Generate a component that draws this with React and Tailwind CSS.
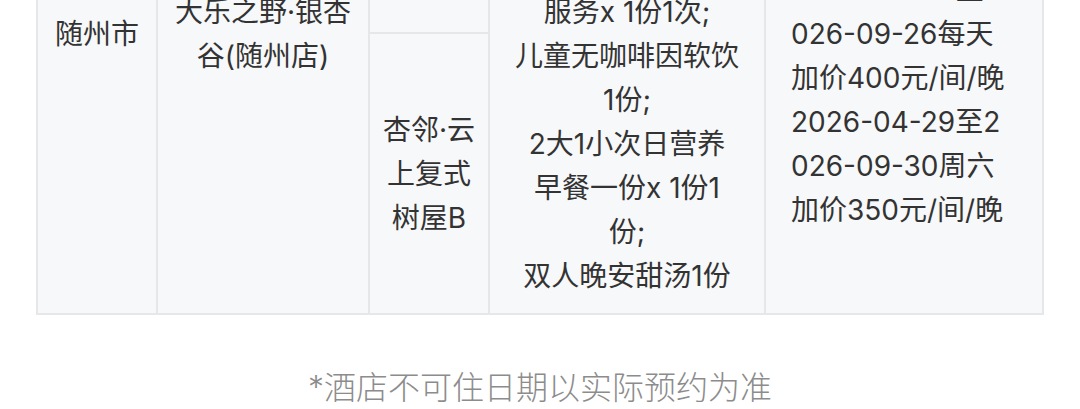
import React from 'react';

const FONT = { fontFamily: 'Inter, "Noto Sans CJK SC", sans-serif' };

const packageLines = [
  '入住1晚;',
  '欢迎水果1份;',
  '双人下午茶1份;',
  '亲子自然研学课程',
  '管家专属接送站',
  '服务x 1份1次;',
  '儿童无咖啡因软饮',
  '1份;',
  '2大1小次日营养',
  '早餐一份x 1份1',
  '份;',
  '双人晚安甜汤1份',
];

const priceLines = [
  '2026-04-29至2',
  '026-05-05每天',
  '加价600元/间/晚',
  '2026-05-06至2',
  '026-09-26每天',
  '加价400元/间/晚',
  '2026-04-29至2',
  '026-09-30周六',
  '加价350元/间/晚',
];

const Lines = ({ lines }) => (
  <div>
    {lines.map((l, i) => (
      <div key={i} className="whitespace-nowrap">{l}</div>
    ))}
  </div>
);

export default function App() {
  return (
    <div className="w-[1080px] h-[409px] bg-white overflow-hidden" style={FONT}>
      <div className="px-[36px]">
        {/* hotel table, scrolled so the top part is out of view */}
        <div className="mt-[-248px] bg-[#e6e7e9] p-[2px] grid grid-cols-[118px_210px_118px_274px_276px] grid-rows-[278px_279px] gap-[2px] text-[28px] leading-[44px] text-[#333333]">
          <div className="row-span-2 bg-[#f7f8fa] flex items-center justify-center text-center">
            随州市
          </div>
          <div className="row-span-2 bg-[#f7f8fa] flex items-center justify-center text-center">
            <Lines lines={['大乐之野·银杏', '谷(随州店)']} />
          </div>
          <div className="bg-[#f7f8fa] flex items-center justify-center text-center">
            <Lines lines={['杏邻·云', '上复式', '树屋A']} />
          </div>
          <div className="row-span-2 bg-[#f7f8fa] flex items-center justify-center text-center">
            <Lines lines={packageLines} />
          </div>
          <div className="row-span-2 bg-[#f7f8fa] flex items-center pl-[25px]">
            <Lines lines={priceLines} />
          </div>
          <div className="bg-[#f7f8fa] flex items-center justify-center text-center">
            <Lines lines={['杏邻·云', '上复式', '树屋B']} />
          </div>
        </div>
      </div>

      <p className="mt-[51px] text-center text-[32px] leading-[44px] font-light text-[#8c8c8c]">
        *酒店不可住日期以实际预约为准
      </p>
    </div>
  );
}
